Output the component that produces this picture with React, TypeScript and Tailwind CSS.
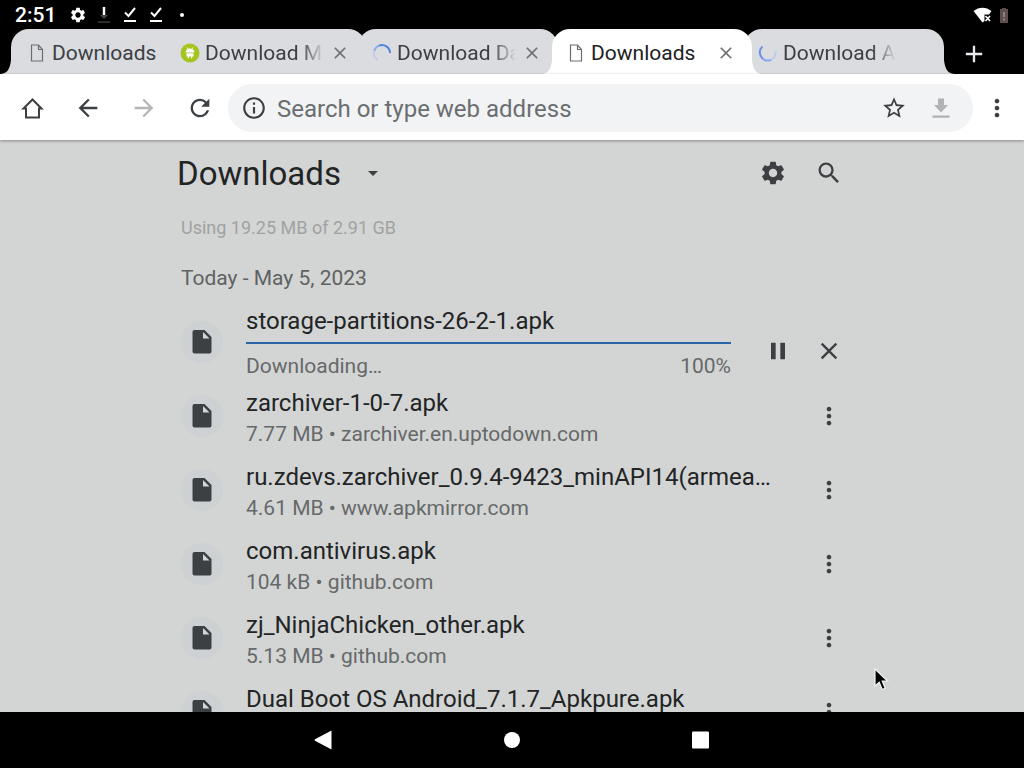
import React from 'react';
import {
  MdAdd,
  MdArrowBack,
  MdArrowDropDown,
  MdArrowForward,
  MdClose,
  MdInfoOutline,
  MdMoreVert,
  MdPause,
  MdRefresh,
  MdSearch,
  MdSettings,
  MdStarBorder,
} from 'react-icons/md';

type TabIcon = 'page' | 'android' | 'loading' | 'loadingStart';

interface Tab {
  title: string;
  icon: TabIcon;
  active?: boolean;
  closable?: boolean;
  shape: string;
  titleStyle?: string;
}

interface FileEntry {
  name: string;
  details?: string;
}

const FADE = '[mask-image:linear-gradient(to_left,transparent,black_24px)]';

const TABS: Tab[] = [
  { title: 'Downloads', icon: 'page', shape: 'w-[155px] shrink-0 rounded-tl-[18px] pl-4 pr-1' },
  { title: 'Download M', icon: 'android', closable: true, titleStyle: FADE, shape: 'flex-1 rounded-tr-[18px] pl-[14px] pr-4' },
  { title: 'Download Da', icon: 'loading', closable: true, titleStyle: FADE, shape: 'flex-1 -ml-2 rounded-t-[18px] pl-[14px] pr-4' },
  { title: 'Downloads', icon: 'page', active: true, closable: true, shape: 'flex-1 -ml-[6px] rounded-t-[18px] pl-[14px] pr-4' },
  { title: 'Download A', icon: 'loadingStart', titleStyle: `${FADE} mr-8`, shape: 'flex-1 -ml-2 rounded-t-[18px] pl-[14px] pr-4' },
];

const FILES: FileEntry[] = [
  { name: 'zarchiver-1-0-7.apk', details: '7.77 MB • zarchiver.en.uptodown.com' },
  { name: 'ru.zdevs.zarchiver_0.9.4-9423_minAPI14(armea…', details: '4.61 MB • www.apkmirror.com' },
  { name: 'com.antivirus.apk', details: '104 kB • github.com' },
  { name: 'zj_NinjaChicken_other.apk', details: '5.13 MB • github.com' },
  { name: 'Dual Boot OS Android_7.1.7_Apkpure.apk' },
];

export default function App() {
  return (
    <div className="relative flex h-screen flex-col overflow-hidden bg-black font-['Roboto',sans-serif]">
      <StatusBar />
      <TabStrip />
      <Toolbar />

      <main className="min-h-0 flex-1 overflow-hidden bg-[#d3d5d4] px-4 text-[#3c4043]">
        <div className="mx-auto max-w-[680px]">
          <header className="flex h-[66px] items-center gap-[10px]">
            <label className="relative ml-[5px] mr-auto flex items-center">
              <select aria-label="Category" className="appearance-none bg-transparent pr-11 pt-[2px] text-[33px] leading-10 text-[#222425] outline-none">
                <option>Downloads</option>
              </select>
              <MdArrowDropDown size={24} className="pointer-events-none absolute right-0" />
            </label>
            <IconButton label="Settings" className="h-12 w-[46px]"><MdSettings size={28} /></IconButton>
            <IconButton label="Search" className="h-12 w-[46px]"><MdSearch size={28} /></IconButton>
          </header>

          <p className="flex h-[42px] items-center pl-[9px] text-[18px] text-[#a0a2a2]">Using 19.25 MB of 2.91 GB</p>
          <h2 className="flex h-14 items-center pl-[9px] pt-[6px] text-[21px] text-[#5f6263]">Today - May 5, 2023</h2>

          <ul>
            <ActiveDownload name="storage-partitions-26-2-1.apk" percent={100} />
            {FILES.map(file => (
              <FileRow key={file.name} file={file} />
            ))}
          </ul>
        </div>
      </main>

      <NavBar />
      <MousePointer />
    </div>
  );
}

const StatusBar = () => (
  <div className="flex h-[29px] shrink-0 items-center justify-between pl-[15px] pr-[15px] text-white">
    <div className="flex items-center gap-2">
      <span className="mr-[5px] text-[21px] font-medium leading-7">2:51</span>
      <MdSettings size={18} />
      <svg width="18" height="18" viewBox="0 0 18 18" fill="none">
        <path d="M9 1v8" stroke="#fff" strokeWidth="2.5" />
        <path d="M5 9h8l-4 4z" fill="#444" />
        <path d="M3 16h12" stroke="#2c2c2c" strokeWidth="2" />
      </svg>
      <DoneIcon />
      <DoneIcon />
      <svg width="18" height="18" viewBox="0 0 18 18"><circle cx="9" cy="9" r="2" fill="#fff" /></svg>
    </div>
    <div className="flex items-center gap-[6px]">
      <svg width="20" height="18" viewBox="0 0 20 18">
        <path d="M0.5 5C6 0.5 13 0.5 18.5 5L16 8.5H11.5V15L9.5 16.5z" fill="#fff" />
        <path d="M12.5 10l4.500 5M17 10l-4.500 5" stroke="#fff" strokeWidth="1.6" />
      </svg>
      <svg width="10" height="16" viewBox="0 0 10 16">
        <path d="M3 1h4v1h2v14H1V2h2z" fill="#5d4f4d" />
        <path d="M5 5v5M5 11.5v2" stroke="#a58f8b" strokeWidth="1.5" />
      </svg>
    </div>
  </div>
);

const DoneIcon = () => (
  <svg width="18" height="18" viewBox="0 0 18 18" fill="none" stroke="#fff" strokeWidth="2">
    <path d="M4 6.5l3.500 3.500L14 2" />
    <path d="M3 15h12" />
  </svg>
);

const TabStrip = () => (
  <div className="flex h-[45px] shrink-0 pl-[11px]">
    {TABS.map((tab, i) => (
      <div
        key={i}
        className={`relative flex min-w-0 items-center pt-[2px] ${tab.active ? 'z-10 bg-white text-[#202124]' : 'bg-[#dadce0] text-[#3c4043]'} ${tab.shape}`}
      >
        {(i === 0 || tab.active) && <TabFoot side="left" color={tab.active ? '#fff' : '#dadce0'} />}
        <span className="flex w-5 shrink-0 justify-center"><Favicon icon={tab.icon} /></span>
        <button
          className={`ml-[5px] min-w-0 flex-1 overflow-hidden whitespace-nowrap text-left text-[21px] leading-7 ${tab.titleStyle ?? ''}`}
        >
          {tab.title}
        </button>
        {tab.closable && (
          <IconButton label="Close tab" className="ml-[6px] h-5 w-5 text-[#6f7174]"><MdClose size={20} /></IconButton>
        )}
        {(i === TABS.length - 1 || tab.active) && <TabFoot side="right" color={tab.active ? '#fff' : '#dadce0'} />}
      </div>
    ))}
    <IconButton label="New tab" className="mr-[20px] w-[60px] pt-1 text-[#e8eaed]"><MdAdd size={28} /></IconButton>
  </div>
);

// Curved foot that joins a tab to the toolbar below it
const TabFoot = ({ side, color }: { side: 'left' | 'right', color: string }) => (
  <svg
    width="11"
    height="14"
    viewBox="0 0 11 14"
    className={`absolute bottom-0 ${side === 'left' ? 'right-full' : 'left-full -scale-x-100'}`}
  >
    <path d="M11 0C10 9 7 14 0 14H11z" fill={color} />
  </svg>
);

const Favicon = ({ icon }: { icon: TabIcon }) => {
  switch (icon) {
    case 'page':
      return (
        <svg width="14" height="18" viewBox="0 0 14 18" fill="none" stroke="#6b6e70" strokeWidth="1.2">
          <path d="M1.5 1h7l4 4.500V17h-11zM8.500 1v4.500h4" />
        </svg>
      );
    case 'android':
      return (
        <svg width="20" height="20" viewBox="0 0 20 20">
          <circle cx="10" cy="10" r="9.5" fill="#a4c520" />
          <path d="M5.5 9.5a4.500 4 0 0 1 9 0zM6.500 10.300h7v3.200h-1.300v1.700h-1.200v-1.700H9v1.700H7.800v-1.700H6.500z" fill="#fff" />
          <path d="M7 4.500l1.200 2M13 4.500l-1.200 2" stroke="#fff" strokeWidth="0.8" />
        </svg>
      );
    case 'loading':
      return (
        <svg width="20" height="20" viewBox="0 0 20 20" fill="none" strokeWidth="2">
          <path d="M2 8.500A8 8 0 0 0 6 17" stroke="#c3cee6" />
          <path d="M2.300 8A8 8 0 0 1 7 2.600" stroke="#8eabea" />
          <path d="M7 2.600A8 8 0 0 1 18 10" stroke="#5383e4" />
        </svg>
      );
    case 'loadingStart':
      return (
        <svg width="20" height="20" viewBox="0 0 20 20" fill="none" strokeWidth="2">
          <path d="M17.500 8A8 8 0 0 1 12.500 17" stroke="#bccaf0" />
          <path d="M13 16.800A8 8 0 0 1 4 15" stroke="#8ba6ea" />
          <path d="M4.500 15.500A8 8 0 0 1 4.500 3.500" stroke="#6b8fe8" />
        </svg>
      );
  }
};

const Toolbar = () => (
  <div className="z-10 flex h-[66px] shrink-0 items-center bg-white pl-1 pr-[3px] pt-[2px] text-[#3c4043] shadow-[0_1px_3px_rgba(0,0,0,0.35)]">
    <IconButton label="Home" className="h-12 w-14">
      <svg width="24" height="24" viewBox="0 0 24 24" fill="none" stroke="currentColor" strokeWidth="2">
        <path d="M3.500 12.500H6V21.500H19V12.500H21.500L12.500 3.500z" />
      </svg>
    </IconButton>
    <IconButton label="Back" className="h-12 w-14"><MdArrowBack size={28} /></IconButton>
    <IconButton label="Forward" className="h-12 w-14 text-[#b4b5b7]"><MdArrowForward size={28} /></IconButton>
    <IconButton label="Reload" className="h-12 w-14"><MdRefresh size={28} /></IconButton>
    <div className="flex h-12 min-w-0 flex-1 items-center rounded-full bg-[#f1f3f4] pl-[13px] pr-[18px]">
      <MdInfoOutline size={26} className="shrink-0" />
      <input
        type="text"
        aria-label="Address"
        placeholder="Search or type web address"
        className="mx-[10px] min-w-0 flex-1 bg-transparent pt-[2px] text-[24px] leading-8 outline-none placeholder:text-[#6b6e71]"
      />
      <IconButton label="Bookmark" className="w-7"><MdStarBorder size={26} /></IconButton>
      <IconButton label="Download page" className="ml-[19px] w-7 text-[#b0b2b4]">
        <svg width="28" height="28" viewBox="0 0 28 28" fill="currentColor">
          <path d="M11 4.500h6V11h4l-7 7.500L7 11h4zM5.500 21.500h17v2.200h-17z" />
        </svg>
      </IconButton>
    </div>
    <IconButton label="Menu" className="h-12 w-12"><MdMoreVert size={28} /></IconButton>
  </div>
);

const ActiveDownload = ({ name, percent }: { name: string, percent: number }) => (
  <li className="flex h-[75px] items-center">
    <FileBadge />
    <div className="ml-[23px] min-w-0 flex-1 pt-px">
      <p className="truncate text-[24px] leading-8 text-[#222425]">{name}</p>
      <div role="progressbar" aria-valuenow={percent} className="mt-[5px] h-[2px] bg-[#b5bcc6]">
        <div className="h-full bg-[#2a65a8]" style={{ width: `${percent}%` }} />
      </div>
      <div className="mt-2 flex justify-between text-[21px] leading-7 text-[#66696a]">
        <span>Downloading…</span>
        <span>{percent}%</span>
      </div>
    </div>
    <IconButton label="Pause" className="ml-6 mt-[18px] h-11 w-[46px]"><MdPause size={28} /></IconButton>
    <IconButton label="Cancel" className="ml-[5px] mt-[18px] h-11 w-[46px]"><MdClose size={28} /></IconButton>
  </li>
);

const FileRow = ({ file }: { file: FileEntry }) => (
  <li className="flex h-[74px] items-center">
    <FileBadge />
    <div className="ml-[23px] min-w-0 flex-1 pt-[3px]">
      <p className="truncate text-[24px] leading-8 text-[#222425]">{file.name}</p>
      <p className="mt-px h-7 truncate text-[21px] leading-7 text-[#66696a]">{file.details}</p>
    </div>
    <IconButton label="More options" className="ml-4 h-12 w-[46px]"><MdMoreVert size={28} /></IconButton>
  </li>
);

const FileBadge = () => (
  <span className="ml-[9px] flex h-[42px] w-[42px] shrink-0 items-center justify-center rounded-full bg-[#cdd1d3]">
    <svg width="20" height="24" viewBox="0 0 20 24">
      <path d="M2.500 0H12.500L19.500 7V21.500a2 2 0 0 1-2 2H2.500a2 2 0 0 1-2-2V2a2 2 0 0 1 2-2z" fill="#3c4043" />
      <path d="M11 2v6.500h6.500z" fill="#d3d5d4" />
    </svg>
  </span>
);

const NavBar = () => (
  <nav className="flex h-14 shrink-0 items-center justify-center gap-[133px] text-white">
    <IconButton label="Back" className="h-14 w-14">
      <svg width="20" height="20" viewBox="0 0 20 20" fill="currentColor"><path d="M18.500 0.500V19.500L2 10.800q-1-.8 0-1.600z" /></svg>
    </IconButton>
    <IconButton label="Home" className="h-14 w-14">
      <svg width="20" height="20" viewBox="0 0 20 20" fill="currentColor"><circle cx="10" cy="10" r="8" /></svg>
    </IconButton>
    <IconButton label="Recent apps" className="h-14 w-14">
      <svg width="20" height="20" viewBox="0 0 20 20" fill="currentColor"><rect x="1" y="1.5" width="17" height="17" rx="1" /></svg>
    </IconButton>
  </nav>
);

const MousePointer = () => (
  <svg width="16" height="24" viewBox="0 0 16 24" className="pointer-events-none absolute left-[874px] top-[668px]">
    <path d="M1 1V18L5.200 14.200L8.200 21.500L11.200 20.200L8.200 13H13.500z" fill="#000" stroke="#f4f4f4" strokeWidth="1.2" />
  </svg>
);

const IconButton = ({ label, className = '', children }: { label: string, className?: string, children: React.ReactNode }) => (
  <button aria-label={label} className={`flex shrink-0 items-center justify-center ${className}`}>
    {children}
  </button>
);
